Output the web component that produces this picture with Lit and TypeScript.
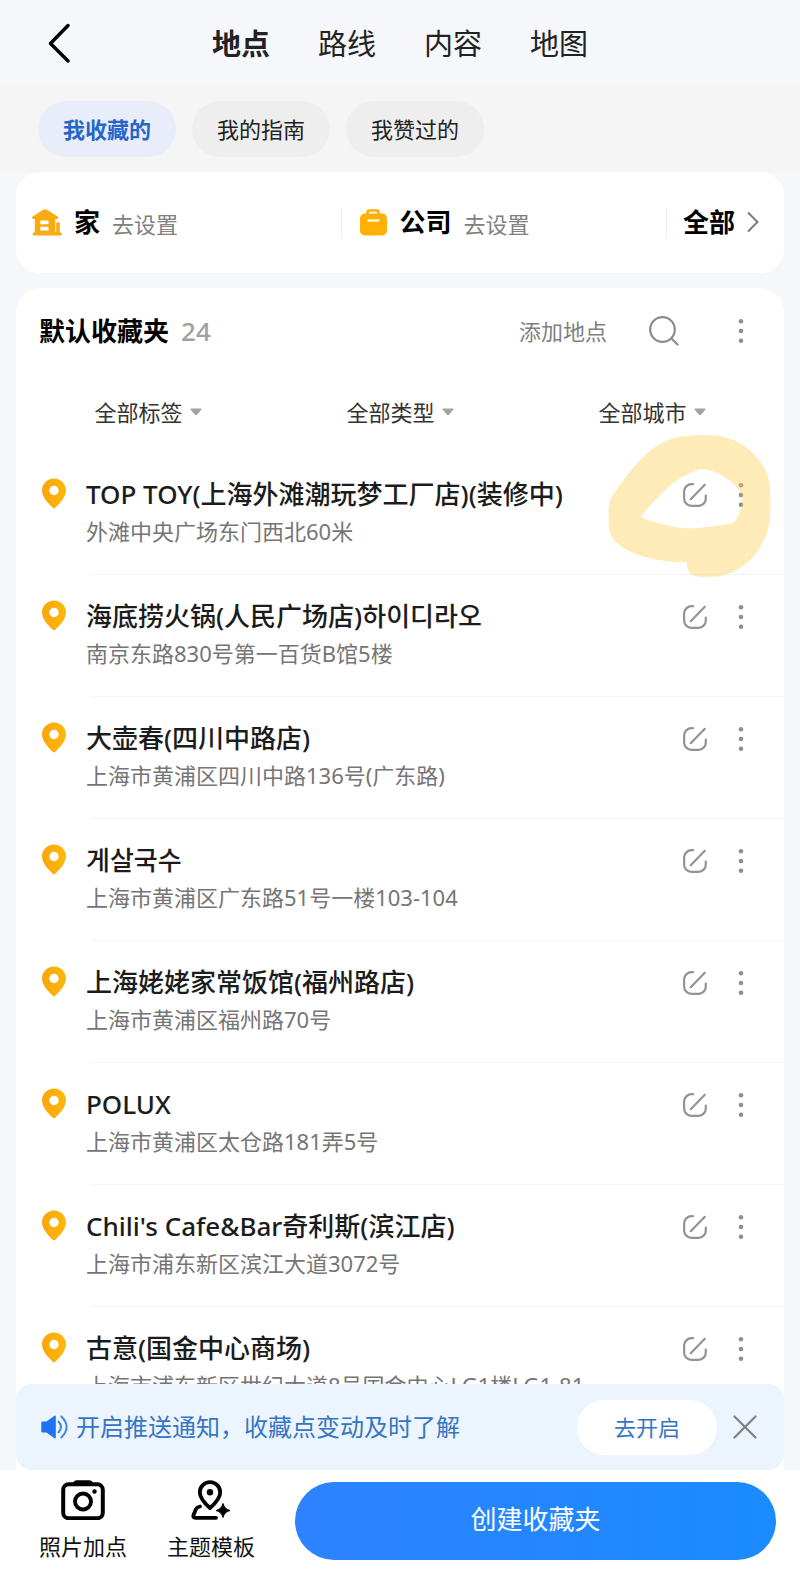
import { LitElement, html, css, svg, nothing } from 'lit'
import { customElement, property, state } from 'lit/decorators.js'
import { classMap } from 'lit/directives/class-map.js'

interface Place {
    name: string
    address: string
    marked?: boolean
}

const TABS = ['地点', '路线', '内容', '地图']
const CHIPS = ['我收藏的', '我的指南', '我赞过的']
const FILTERS = ['全部标签', '全部类型', '全部城市']

const PLACES: Place[] = [
    {
        name: 'TOP TOY(上海外滩潮玩梦工厂店)(装修中)',
        address: '外滩中央广场东门西北60米',
        marked: true,
    },
    {
        name: '海底捞火锅(人民广场店)하이디라오',
        address: '南京东路830号第一百货B馆5楼',
    },
    {
        name: '大壶春(四川中路店)',
        address: '上海市黄浦区四川中路136号(广东路)',
    },
    { name: '게살국수', address: '上海市黄浦区广东路51号一楼103-104' },
    { name: '上海姥姥家常饭馆(福州路店)', address: '上海市黄浦区福州路70号' },
    { name: 'POLUX', address: '上海市黄浦区太仓路181弄5号' },
    {
        name: "Chili's Cafe&Bar奇利斯(滨江店)",
        address: '上海市浦东新区滨江大道3072号',
    },
    {
        name: '古意(国金中心商场)',
        address: '上海市浦东新区世纪大道8号国金中心LG1楼LG1-81',
    },
]

const dots = html`
    <svg width="24" height="24" viewBox="0 0 24 24" fill="#8f8f8f">
        ${[2.3, 12, 21.7].map(
            (y) => svg`<circle cx="12" cy=${y} r="2.3"></circle>`
        )}
    </svg>
`

const base = css`
    * {
        box-sizing: border-box;
    }

    button {
        margin: 0;
        padding: 0;
        border: 0;
        background: none;
        color: inherit;
        font: inherit;
        cursor: pointer;
    }

    a {
        color: inherit;
        text-decoration: none;
    }

    svg {
        display: block;
        flex: none;
    }
`

@customElement('place-item')
export class PlaceItem extends LitElement {
    @property({ attribute: false })
    place!: Place

    static get styles() {
        return [
            base,
            css`
                :host {
                    display: block;
                }

                .row {
                    position: relative;
                    display: flex;
                    align-items: flex-start;
                    height: 122px;
                    padding: 24px 31px 0 26px;
                }

                .pin {
                    margin-top: 1px;
                }

                .text {
                    flex: 1;
                    min-width: 0;
                    margin-left: 20px;
                }

                .name,
                .address {
                    margin: 0;
                    white-space: nowrap;
                }

                .name {
                    font-size: 26px;
                    font-weight: 500;
                    line-height: 34px;
                    color: #1c1c1c;
                }

                .address {
                    margin-top: 4px;
                    font-size: 22px;
                    line-height: 32px;
                    color: #757575;
                }

                .actions {
                    display: flex;
                    gap: 22px;
                    padding-top: 6px;
                }

                .line {
                    position: absolute;
                    right: 0;
                    bottom: 0;
                    left: 76px;
                    height: 1px;
                    background: #f3f3f3;
                }

                .marker {
                    position: absolute;
                    top: -20px;
                    right: 10px;
                    z-index: 1;
                    opacity: 0.4;
                    pointer-events: none;
                }
            `,
        ]
    }

    render() {
        const { name, address, marked } = this.place
        return html`
            <div class="row">
                <svg class="pin" width="24" height="31" viewBox="0 0 24 31">
                    <defs>
                        <linearGradient id="pin" x1="0" y1="0" x2="1" y2="0">
                            <stop offset="0" stop-color="#fba50b"></stop>
                            <stop offset="1" stop-color="#fdb90b"></stop>
                        </linearGradient>
                    </defs>
                    <path
                        fill="url(#pin)"
                        fill-rule="evenodd"
                        d="M12 .5C5.400 .5 0 5.700 0 12.200c0 6.500 5.300 12.300 10.800 17.500.7.700 1.700.7 2.400 0C18.700 24.500 24 18.700 24 12.200 24 5.700 18.600.5 12 .5zm0 7.300a4.700 4.700 0 1 1 0 9.400 4.700 4.700 0 0 1 0-9.400z"
                    ></path>
                </svg>
                <div class="text">
                    <h3 class="name">${name}</h3>
                    <p class="address">${address}</p>
                </div>
                <div class="actions">
                    <button aria-label="编辑">
                        <svg
                            width="24"
                            height="24"
                            viewBox="0 0 24 24"
                            fill="none"
                            stroke="#939393"
                            stroke-width="2.2"
                            stroke-linecap="round"
                        >
                            <path
                                d="M10 1.200H8.500a7.400 7.400 0 0 0-7.400 7.400v6.800a7.400 7.400 0 0 0 7.400 7.400h6.900a7.400 7.400 0 0 0 7.400-7.400v-2.900M21.800 1.800 7.700 16.200"
                            ></path>
                        </svg>
                    </button>
                    <button aria-label="更多">${dots}</button>
                </div>
                <div class="line"></div>
                ${marked
                    ? html`
                          <svg
                              class="marker"
                              width="167"
                              height="147"
                              viewBox="620 460 501 441"
                          >
                              <path
                                  fill="#ffcf4d"
                                  fill-rule="evenodd"
                                  d="M625 690C626 655 640 642 665 608 705 550 755 498 812 478 850 466 905 463 950 468 1015 476 1068 518 1095 570 1112 605 1110 640 1110 700 1110 750 1085 810 1040 850 1010 875 970 893 920 892 880 894 858 886 860 848 790 847 700 835 650 790 625 765 625 750 625 690zM721 711C735 720 800 742 865 747 910 745 960 738 1000 730 1015 712 1028 680 1026 650 1010 605 945 568 900 569 820 592 785 640 721 711z"
                              ></path>
                          </svg>
                      `
                    : nothing}
            </div>
        `
    }
}

@customElement('app-root')
export class AppRoot extends LitElement {
    @state()
    private tab = 0

    @state()
    private chip = 0

    @state()
    private noticeOpen = true

    static get styles() {
        return [
            base,
            css`
                :host {
                    display: flex;
                    flex-direction: column;
                    height: 100vh;
                    overflow: hidden;
                    background: #f5f7fa;
                    color: #222222;
                    font-family: 'Noto Sans', 'Noto Sans CJK SC',
                        'Noto Sans CJK KR', sans-serif;
                    font-size: 22px;
                    line-height: 32px;
                }

                .header {
                    display: grid;
                    grid-template-columns: 1fr auto 1fr;
                    align-items: center;
                    height: 85px;
                    padding: 0 48px;
                }

                .back {
                    justify-self: start;
                }

                .tabs {
                    display: flex;
                    gap: 48px;
                    padding-top: 2px;
                }

                .tab {
                    font-size: 29px;
                    line-height: 40px;
                }

                .tab.active {
                    font-weight: 700;
                }

                .chips {
                    display: flex;
                    gap: 16px;
                    padding: 16px 38px 15px;
                    background: #f5f5f5;
                }

                .chip {
                    height: 56px;
                    padding: 0 25px 1px;
                    border-radius: 28px;
                    background: #eeeeee;
                }

                .chip.active {
                    background: #e8edf9;
                    color: #2565cc;
                    font-weight: 700;
                }

                .shortcuts {
                    display: flex;
                    align-items: center;
                    height: 101px;
                    margin: 0 16px 15px;
                    border-radius: 24px;
                    background: #ffffff;
                }

                .shortcut {
                    display: flex;
                    flex: 1;
                    align-items: center;
                    height: 30px;
                    padding-left: 16px;
                    border-right: 1px solid #ededed;
                }

                .shortcut-name {
                    margin: 0 12px;
                    padding-bottom: 2px;
                    font-size: 26px;
                    font-weight: 700;
                    color: #000000;
                }

                .hint {
                    padding-top: 2px;
                    color: #808080;
                }

                .all {
                    display: flex;
                    gap: 12px;
                    align-items: center;
                    padding: 0 25px 2px 16px;
                    font-size: 26px;
                    font-weight: 700;
                    color: #000000;
                }

                .folder {
                    flex: 1;
                    min-height: 0;
                    margin: 0 16px;
                    border-radius: 24px 24px 0 0;
                    background: #ffffff;
                    overflow-y: auto;
                    scrollbar-width: none;
                }

                .folder-head {
                    display: flex;
                    align-items: center;
                    height: 86px;
                    padding: 0 31px 0 23px;
                }

                .folder-title {
                    margin: 0;
                    font-size: 26px;
                    font-weight: 700;
                    color: #000000;
                }

                .count {
                    flex: 1;
                    margin-left: 12px;
                    font-size: 26px;
                    font-weight: 500;
                    color: #a0a0a0;
                }

                .add {
                    color: #808080;
                }

                .search {
                    margin: 0 50px 0 42px;
                }

                .filters {
                    display: grid;
                    grid-template-columns: repeat(3, 1fr);
                    padding: 22px 6px 25px;
                }

                .filter {
                    display: flex;
                    gap: 6px;
                    align-items: center;
                    justify-content: center;
                }

                .filter select {
                    margin: 0;
                    padding: 0;
                    border: 0;
                    background: none;
                    color: #333333;
                    font: inherit;
                    appearance: none;
                }

                .list {
                    margin: 0;
                    padding: 0;
                    list-style: none;
                }

                .notice-wrap {
                    margin: 0 16px;
                    background: #ffffff;
                }

                .notice {
                    display: flex;
                    align-items: center;
                    height: 86px;
                    padding: 0 27px 0 25px;
                    border-radius: 16px;
                    background: #ecf4fd;
                    color: #3576c4;
                }

                .notice-text {
                    flex: 1;
                    margin: 0 0 0 8px;
                    font-size: 24px;
                }

                .enable {
                    width: 140px;
                    height: 55px;
                    margin-right: 16px;
                    border-radius: 28px;
                    background: #ffffff;
                }

                .footer {
                    display: flex;
                    align-items: center;
                    height: 102px;
                    padding: 0 24px 0 39px;
                    background: #ffffff;
                    color: #111111;
                }

                .tool {
                    display: flex;
                    flex-direction: column;
                    gap: 10px;
                    align-items: center;
                    margin-right: 40px;
                }

                .create {
                    flex: 1;
                    height: 78px;
                    padding-bottom: 5px;
                    border-radius: 39px;
                    background: linear-gradient(90deg, #2d82ff, #1b8bff);
                    color: #ffffff;
                    font-size: 26px;
                }
            `,
        ]
    }

    renderHeader() {
        return html`
            <header class="header">
                <button class="back" aria-label="返回">
                    <svg
                        width="22"
                        height="40"
                        viewBox="0 0 22 40"
                        fill="none"
                        stroke="#000000"
                        stroke-width="3.4"
                        stroke-linecap="round"
                        stroke-linejoin="round"
                    >
                        <path d="M20 2.500 2.500 20.500 20 38"></path>
                    </svg>
                </button>
                <nav class="tabs">
                    ${TABS.map(
                        (label, i) => html`
                            <button
                                class=${classMap({
                                    tab: true,
                                    active: i === this.tab,
                                })}
                                @click=${() => (this.tab = i)}
                            >
                                ${label}
                            </button>
                        `
                    )}
                </nav>
            </header>
            <div class="chips">
                ${CHIPS.map(
                    (label, i) => html`
                        <button
                            class=${classMap({
                                chip: true,
                                active: i === this.chip,
                            })}
                            @click=${() => (this.chip = i)}
                        >
                            ${label}
                        </button>
                    `
                )}
            </div>
        `
    }

    renderShortcuts() {
        return html`
            <section class="shortcuts">
                <a class="shortcut" href="#home">
                    <svg width="30" height="27" viewBox="0 0 30 27">
                        <path
                            fill="#fbab12"
                            fill-rule="evenodd"
                            d="M11 .7Q13 -.4 15 .7L25.500 7.500Q26.600 8.300 26 9.500 25.700 10 24.500 10H23.300V23H24.200V14.500Q24.200 13.200 25.500 13.200H26.500Q27.800 13.200 27.800 14.500V23.200Q30 23.400 30 25 30 26.500 28.400 26.500H2Q.5 26.500 .5 25 .5 23.500 2.800 23.200V10H1.500Q0 10 0 8.700 0 7.800 1 7.200zM8.300 11.500V15.300H16.500V11.500zM8.300 17.700V21.500H16.500V17.700z"
                        ></path>
                    </svg>
                    <span class="shortcut-name">家</span>
                    <span class="hint">去设置</span>
                </a>
                <a class="shortcut" href="#company">
                    <svg width="30" height="27" viewBox="0 0 30 27">
                        <path
                            d="M9.500 6V3.500Q9.500 1.500 11.500 1.500H18.500Q20.500 1.500 20.500 3.500V6"
                            fill="none"
                            stroke="#fcae08"
                            stroke-width="2.600"
                        ></path>
                        <rect
                            x="2"
                            y="4.500"
                            width="27"
                            height="22"
                            rx="5"
                            fill="#fdb005"
                        ></rect>
                        <path
                            d="M10.500 11.500H20.500"
                            stroke="#fff3d6"
                            stroke-width="2.400"
                            stroke-linecap="round"
                        ></path>
                    </svg>
                    <span class="shortcut-name">公司</span>
                    <span class="hint">去设置</span>
                </a>
                <a class="all" href="#all">
                    全部
                    <svg
                        width="12"
                        height="22"
                        viewBox="0 0 12 22"
                        fill="none"
                        stroke="#7a7a7a"
                        stroke-width="2"
                    >
                        <path d="M1 1.500 10.500 11 1 20.500"></path>
                    </svg>
                </a>
            </section>
        `
    }

    renderFolder() {
        return html`
            <main class="folder">
                <div class="folder-head">
                    <h2 class="folder-title">默认收藏夹</h2>
                    <span class="count">24</span>
                    <button class="add">添加地点</button>
                    <button class="search" aria-label="搜索">
                        <svg
                            width="30"
                            height="30"
                            viewBox="0 0 30 30"
                            fill="none"
                            stroke="#8c8c8c"
                            stroke-width="2.2"
                            stroke-linecap="round"
                        >
                            <circle cx="13.500" cy="13.500" r="12.300"></circle>
                            <path d="M22.500 22.500 28.500 28.500"></path>
                        </svg>
                    </button>
                    <button aria-label="更多">${dots}</button>
                </div>
                <div class="filters">
                    ${FILTERS.map(
                        (label) => html`
                            <label class="filter">
                                <select aria-label=${label}>
                                    <option>${label}</option>
                                </select>
                                <svg width="12" height="8" viewBox="0 0 12 8">
                                    <path
                                        fill="#a3a3a3"
                                        d="M1 .5H11Q12 .8 11.500 1.600L7 6.800Q6 7.700 5 6.800L.5 1.600Q0 .8 1 .5z"
                                    ></path>
                                </svg>
                            </label>
                        `
                    )}
                </div>
                <ul class="list">
                    ${PLACES.map(
                        (place) => html`
                            <li><place-item .place=${place}></place-item></li>
                        `
                    )}
                </ul>
            </main>
        `
    }

    renderNotice() {
        if (!this.noticeOpen) return nothing
        return html`
            <div class="notice-wrap">
                <div class="notice">
                    <svg width="27" height="24" viewBox="0 0 27 24">
                        <path
                            fill="#1f73f0"
                            d="M1.500 6.500H5.500L13.500 .8Q14.800 .2 14.800 1.600V22.400Q14.800 23.800 13.500 23.200L5.500 17.500H1.500Q.3 17.500 .3 16.300V7.700Q.3 6.500 1.500 6.500z"
                        ></path>
                        <path
                            d="M17.500 6.500Q22.500 12 17.500 17.500M20.300 1.500Q31 12 20.300 22.500"
                            fill="none"
                            stroke="#4586dc"
                            stroke-width="2"
                            stroke-linecap="round"
                        ></path>
                    </svg>
                    <p class="notice-text">开启推送通知，收藏点变动及时了解</p>
                    <button class="enable">去开启</button>
                    <button
                        aria-label="关闭"
                        @click=${() => (this.noticeOpen = false)}
                    >
                        <svg
                            width="24"
                            height="24"
                            viewBox="0 0 24 24"
                            stroke="#808080"
                            stroke-width="2.2"
                            stroke-linecap="round"
                        >
                            <path d="M1.500 1.500 22.500 22.500M22.500 1.500 1.500 22.500"></path>
                        </svg>
                    </button>
                </div>
            </div>
        `
    }

    renderFooter() {
        return html`
            <footer class="footer">
                <button class="tool">
                    <svg width="44" height="40" viewBox="0 0 44 40">
                        <path
                            d="M11.500 4Q12.500 .2 16 .2H28Q31.500 .2 32.500 4z"
                            fill="#000000"
                        ></path>
                        <rect
                            x="2.200"
                            y="4.200"
                            width="39.600"
                            height="34"
                            rx="5.500"
                            fill="none"
                            stroke="#000000"
                            stroke-width="4"
                        ></rect>
                        <circle
                            cx="22"
                            cy="21.500"
                            r="8"
                            fill="none"
                            stroke="#000000"
                            stroke-width="3.900"
                        ></circle>
                        <circle cx="33.500" cy="11.500" r="2.200"></circle>
                    </svg>
                    照片加点
                </button>
                <button class="tool">
                    <svg width="40" height="40" viewBox="0 0 40 40">
                        <g
                            fill="none"
                            stroke="#000000"
                            stroke-width="3.800"
                            stroke-linecap="round"
                            stroke-linejoin="round"
                        >
                            <path
                                d="M19 28C14 23.500 8.800 18.500 8.800 12.400a10.200 10.200 0 0 1 20.400 0C29.200 18.500 24 23.500 19 28z"
                            ></path>
                            <path d="M9 26.500Q6 27 5 29L2.500 35Q1.700 37.800 4.500 37.800H25"></path>
                        </g>
                        <circle cx="19" cy="12.300" r="3.200"></circle>
                        <path
                            d="M32 23.500Q33.300 29.200 39 30.500 33.300 31.800 32 37.500 30.700 31.800 25 30.500 30.700 29.200 32 23.500z"
                            stroke="#000000"
                        ></path>
                    </svg>
                    主题模板
                </button>
                <button class="create">创建收藏夹</button>
            </footer>
        `
    }

    render() {
        return html`
            ${this.renderHeader()} ${this.renderShortcuts()}
            ${this.renderFolder()} ${this.renderNotice()}
            ${this.renderFooter()}
        `
    }
}
